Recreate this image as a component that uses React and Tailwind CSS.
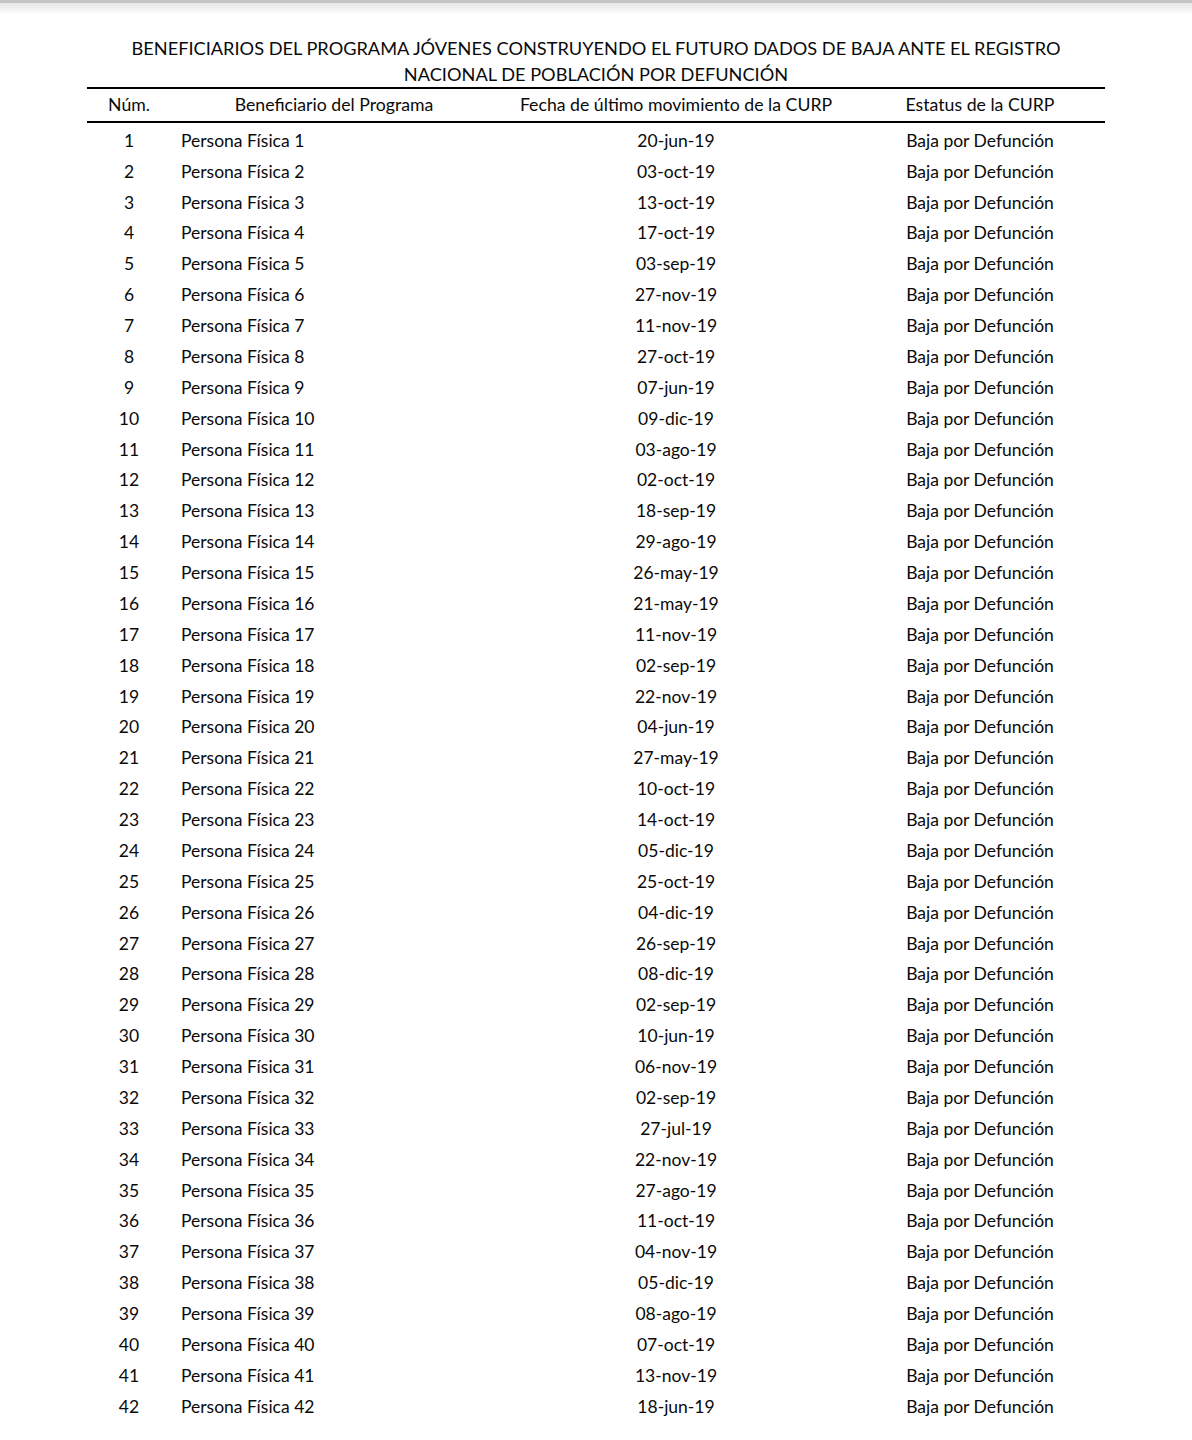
const rows = [
  "20-jun-19","03-oct-19","13-oct-19","17-oct-19","03-sep-19","27-nov-19","11-nov-19","27-oct-19","07-jun-19","09-dic-19",
  "03-ago-19","02-oct-19","18-sep-19","29-ago-19","26-may-19","21-may-19","11-nov-19","02-sep-19","22-nov-19","04-jun-19",
  "27-may-19","10-oct-19","14-oct-19","05-dic-19","25-oct-19","04-dic-19","26-sep-19","08-dic-19","02-sep-19","10-jun-19",
  "06-nov-19","02-sep-19","27-jul-19","22-nov-19","27-ago-19","11-oct-19","04-nov-19","05-dic-19","08-ago-19","07-oct-19",
  "13-nov-19","18-jun-19",
];

export default function App() {
  return (
    <div className="w-[1192px] min-h-[1440px] bg-white text-[#0a0a0a] font-['Lato',sans-serif]">
      <div className="h-[3px] bg-[#c4c4c4]" />
      <div className="h-[12px] bg-gradient-to-b from-[#e6e6e6] to-white" />
      <div className="w-[1018px] mx-auto">
        <div className="pt-[20px] text-center text-[18.2px] leading-[26px] whitespace-nowrap">
          <div>BENEFICIARIOS DEL PROGRAMA JÓVENES CONSTRUYENDO EL FUTURO DADOS DE BAJA ANTE EL REGISTRO</div>
          <div>NACIONAL DE POBLACIÓN POR DEFUNCIÓN</div>
        </div>
        <div className="border-t-2 border-b-2 border-black grid grid-cols-[84px_326px_358px_250px] h-[36px] items-center text-[17.7px]">
          <div className="text-center">Núm.</div>
          <div className="text-center">Beneficiario del Programa</div>
          <div className="text-center">Fecha de último movimiento de la CURP</div>
          <div className="text-center">Estatus de la CURP</div>
        </div>
        <div className="pt-[2.5px] text-[17.5px]">
          {rows.map((d, i) => (
            <div key={i} className="grid grid-cols-[84px_326px_358px_250px] h-[30.88px] items-center">
              <div className="text-center">{i + 1}</div>
              <div className="pl-[10px]">Persona Física {i + 1}</div>
              <div className="text-center">{d}</div>
              <div className="text-center">Baja por Defunción</div>
            </div>
          ))}
        </div>
      </div>
    </div>
  );
}
